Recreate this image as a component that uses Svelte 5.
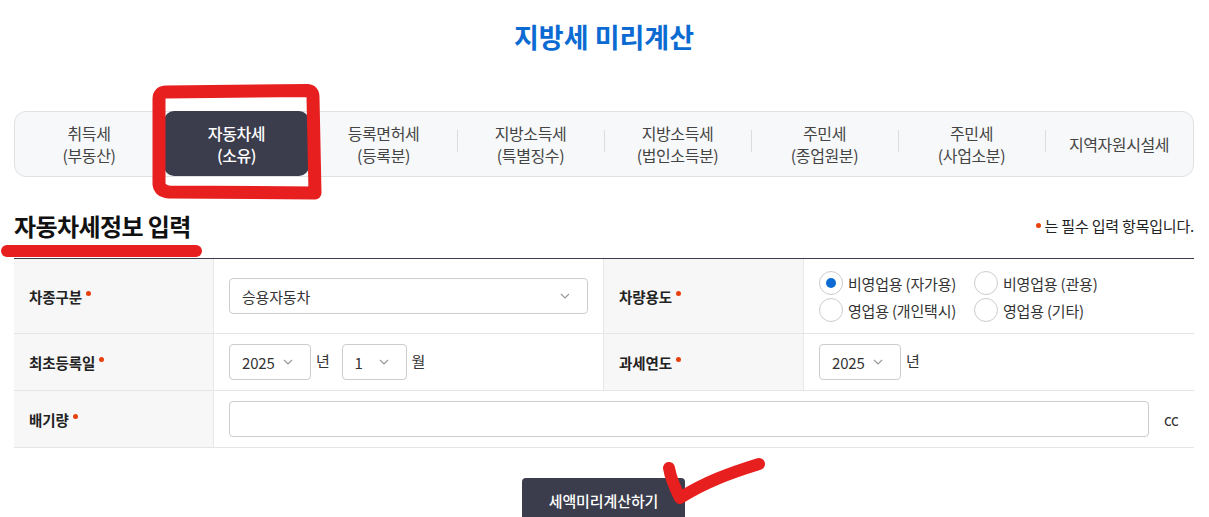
<script>
	const tabs = [
		['취득세', '(부동산)'],
		['자동차세', '(소유)'],
		['등록면허세', '(등록분)'],
		['지방소득세', '(특별징수)'],
		['지방소득세', '(법인소득분)'],
		['주민세', '(종업원분)'],
		['주민세', '(사업소분)'],
		['지역자원시설세']
	];
	const uses = [
		['비영업용 (자가용)', true],
		['비영업용 (관용)', false],
		['영업용 (개인택시)', false],
		['영업용 (기타)', false]
	];
</script>

{#snippet chevron()}
	<svg class="chev" width="10" height="6" viewBox="0 0 10 6"><path d="M1 1l4 4 4-4" fill="none" stroke="#999" stroke-width="1.2" /></svg>
{/snippet}

<div class="page">
	<h1>지방세 미리계산</h1>

	<nav class="tabs">
		{#each tabs as lines, i}
			<div class="tab" class:active={i === 1} class:nosep={i < 2}>
				{#each lines as line}
					<span>{line}</span>
				{/each}
			</div>
		{/each}
	</nav>

	<div class="head">
		<h2>자동차세정보 입력</h2>
		<p><i class="dot"></i>는 필수 입력 항목입니다.</p>
	</div>

	<div class="table">
		<div class="row r1">
			<div class="th">차종구분<i class="dot"></i></div>
			<div class="td">
				<div class="select wide"><span>승용자동차</span>{@render chevron()}</div>
			</div>
			<div class="th">차량용도<i class="dot"></i></div>
			<div class="td radios">
				{#each uses as [name, on]}
					<label>
						<span class="radio" class:on></span>
						{name}
					</label>
				{/each}
			</div>
		</div>
		<div class="row r2">
			<div class="th">최초등록일<i class="dot"></i></div>
			<div class="td dates">
				<div class="select year"><span>2025</span>{@render chevron()}</div>
				<em>년</em>
				<div class="select month"><span>1</span>{@render chevron()}</div>
				<em>월</em>
			</div>
			<div class="th">과세연도<i class="dot"></i></div>
			<div class="td dates">
				<div class="select year"><span>2025</span>{@render chevron()}</div>
				<em>년</em>
			</div>
		</div>
		<div class="row r3">
			<div class="th">배기량<i class="dot"></i></div>
			<div class="td full">
				<div class="input"></div>
				<span class="unit">cc</span>
			</div>
		</div>
	</div>

	<div class="actions">
		<button>세액미리계산하기</button>
	</div>

	<svg class="marks" width="1209" height="517" viewBox="0 0 1209 517">
		<g fill="none" stroke="#e71f1f" stroke-linecap="round" stroke-linejoin="round">
			<path d="M159 184 L159 99 Q159 92 166 92 L307 90.5 Q313 90.5 313 97 L315 193 L169 192 Q160 191 159 184" stroke-width="13" />
			<path d="M7 251 L196 251" stroke-width="12" />
			<path d="M669 468 C671 480 676 490 680 498 C705 482 730 473 759 464" stroke-width="12" />
		</g>
	</svg>
</div>

<style>
	:global(body) {
		margin: 0;
		background: #fff;
	}

	.page {
		position: relative;
		width: 1209px;
		height: 517px;
		overflow: hidden;
		padding: 0 15px 0 14px;
		box-sizing: border-box;
		font-family: 'Noto Sans CJK KR', 'Noto Sans', sans-serif;
		color: #333;
		font-size: 15px;
		letter-spacing: -0.2px;
	}

	h1 {
		margin: 0;
		padding-top: 17px;
		height: 111px;
		box-sizing: border-box;
		text-align: center;
		font-size: 27px;
		line-height: 40px;
		font-weight: 700;
		color: #0b6bd3;
		letter-spacing: 0;
	}

	.tabs {
		display: grid;
		grid-template-columns: 148px repeat(6, 147px) 1fr;
		height: 66px;
		box-sizing: border-box;
		background: #f7f8fa;
		border: 1px solid #e1e1e1;
		border-radius: 12px;
	}

	.tab {
		position: relative;
		display: flex;
		flex-direction: column;
		align-items: center;
		justify-content: center;
		font-size: 16px;
		letter-spacing: -0.4px;
		line-height: 22px;
		color: #444;
	}

	.tab::before {
		content: '';
		position: absolute;
		left: 0;
		top: 18px;
		height: 22px;
		border-left: 1px solid #ddd;
	}

	.tab.nosep::before,
	.tab.active + .tab::before {
		display: none;
	}

	.tab.active {
		margin: -1px 1px 0;
		height: 65px;
		background: #3b3c4c;
		color: #fff;
		border-radius: 10px;
		font-weight: 500;
	}

	.head {
		display: flex;
		justify-content: space-between;
		align-items: center;
		height: 82px;
		padding: 21px 0 6px;
		box-sizing: border-box;
		border-bottom: 1px solid #3b3c4c;
	}

	h2 {
		margin: 0;
		font-size: 24px;
		font-weight: 700;
		color: #111;
		letter-spacing: -0.6px;
	}

	.head p {
		margin: 0;
		color: #222;
		display: flex;
		align-items: center;
		gap: 4px;
	}

	.dot {
		display: inline-block;
		width: 5px;
		height: 5px;
		border-radius: 50%;
		background: #e8400c;
	}

	.row {
		display: grid;
		grid-template-columns: 200px 390px 200px 1fr;
		border-bottom: 1px solid #e5e5e5;
		box-sizing: border-box;
	}

	.r1 { height: 75px; }
	.r2 { height: 57px; }
	.r3 { height: 57px; grid-template-columns: 200px 1fr; }

	.th {
		display: flex;
		align-items: center;
		padding-left: 15px;
		background: #f7f7f7;
		border-right: 1px solid #e8e8e8;
		font-size: 14.5px;
		font-weight: 700;
		color: #222;
		box-sizing: border-box;
		letter-spacing: -0.1px;
	}

	.th .dot {
		margin: -6px 0 0 4px;
	}

	.td {
		display: flex;
		align-items: center;
		padding-left: 15px;
		box-sizing: border-box;
		border-right: 1px solid #e8e8e8;
	}

	.td:last-child {
		border-right: 0;
	}

	.select {
		display: flex;
		align-items: center;
		justify-content: space-between;
		height: 36px;
		box-sizing: border-box;
		border: 1px solid #ccc;
		border-radius: 4px;
		padding: 0 12px;
		color: #333;
		background: #fff;
	}

	.wide { width: 359px; }
	.wide .chev { margin-right: 5px; }
	.year { width: 82px; }
	.year .chev { margin-right: 5px; }
	.month { width: 65px; padding-right: 17px; }

	.dates {
		gap: 5px;
	}

	.dates em {
		font-style: normal;
		color: #333;
		margin-right: 7px;
		margin-top: -4px;
	}

	.radios {
		display: grid;
		grid-template-columns: 155px 1fr;
		align-content: center;
		row-gap: 3px;
		padding-top: 1px;
	}

	.radios label {
		display: flex;
		align-items: center;
		gap: 5px;
		color: #333;
		height: 24px;
	}

	.radio {
		position: relative;
		width: 24px;
		height: 24px;
		box-sizing: border-box;
		border: 1px solid #ccc;
		border-radius: 50%;
		background: #fff;
	}

	.radio.on::after {
		content: '';
		position: absolute;
		left: 6px;
		top: 6px;
		width: 10px;
		height: 10px;
		border-radius: 50%;
		background: #0b6bd3;
	}

	.full {
		gap: 15px;
	}

	.input {
		width: 920px;
		height: 36px;
		box-sizing: border-box;
		border: 1px solid #ccc;
		border-radius: 4px;
	}

	.unit {
		color: #333;
	}

	.actions {
		display: flex;
		justify-content: center;
		margin-top: 30px;
		padding-right: 1px;
	}

	button {
		width: 163px;
		height: 45px;
		border: 0;
		border-radius: 4px;
		background: #3b3c4c;
		color: #fff;
		font: 500 15px 'Noto Sans CJK KR', sans-serif;
		letter-spacing: -0.1px;
	}

	.marks {
		position: absolute;
		left: 0;
		top: 0;
		pointer-events: none;
	}
</style>
